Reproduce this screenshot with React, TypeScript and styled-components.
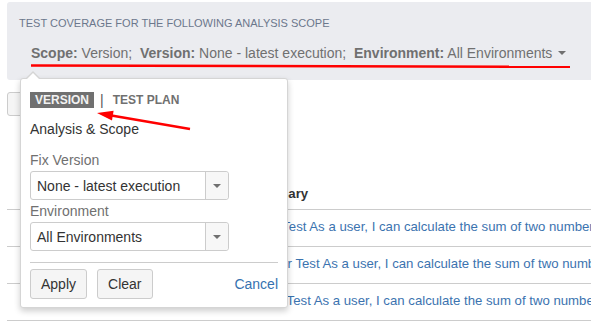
import styled, { createGlobalStyle } from "styled-components";

const GlobalStyle = createGlobalStyle`
  body {
    margin: 0;
    background: #fff;
    font-family: "Liberation Sans", Arial, sans-serif;
    color: #333;
  }
`;

const Page = styled.div`
  position: relative;
  width: 591px;
  height: 330px;
  overflow: hidden;
  padding: 2px 0 0 7px;
  box-sizing: border-box;
`;

const ScopePanel = styled.div`
  height: 78px;
  width: 600px;
  box-sizing: border-box;
  background: #ebecf0;
  border-radius: 3px;
  padding: 14px 12px 0;
`;

const Title = styled.div`
  font-size: 11px;
  line-height: 14px;
  color: #6b778c;
  text-transform: uppercase;
`;

const ScopeLine = styled.div`
  margin-top: 13px;
  padding-left: 12px;
  font-size: 14px;
  line-height: 20px;
  color: #707070;
  display: flex;
  align-items: center;
  white-space: pre;

  b {
    font-weight: bold;
  }
`;

const Caret = styled.span`
  display: inline-block;
  margin-left: 6px;
  border-left: 4px solid transparent;
  border-right: 4px solid transparent;
  border-top: 4px solid #707070;
`;

const Toolbar = styled.div`
  margin-top: 12px;
  display: flex;
  gap: 8px;
`;

const ToolButton = styled.button`
  height: 24px;
  width: 90px;
  background: #f5f5f5;
  border: 1px solid #ccc;
  border-radius: 3px;
`;

const Table = styled.div`
  margin-top: 62px;
  width: 600px;
`;

const Row = styled.div<{ $head?: boolean }>`
  display: grid;
  grid-template-columns: 241px 1fr;
  height: ${(p) => (p.$head ? "32px" : "37px")};
  align-items: center;
  border-bottom: 1px solid #ccc;
  font-size: 13.2px;
  font-weight: ${(p) => (p.$head ? "bold" : "normal")};
  color: ${(p) => (p.$head ? "#333" : "#3b73af")};
  white-space: nowrap;
  overflow: hidden;
  padding-bottom: ${(p) => (p.$head ? "0" : "3px")};
  box-sizing: border-box;
`;

const Popup = styled.div`
  position: absolute;
  left: 20px;
  top: 78px;
  width: 268px;
  box-sizing: border-box;
  background: #fff;
  border: 1px solid #d5d5d5;
  border-radius: 3px;
  box-shadow: 0 3px 6px rgba(0, 0, 0, 0.2);
  padding: 13px 9px 8px;

  &::before,
  &::after {
    content: "";
    position: absolute;
    left: 5px;
    border-left: 7px solid transparent;
    border-right: 7px solid transparent;
  }
  &::before {
    top: -8px;
    border-bottom: 7px solid #d5d5d5;
  }
  &::after {
    top: -6px;
    border-bottom: 7px solid #fff;
  }
`;

const Tabs = styled.div`
  display: flex;
  align-items: center;
  height: 16px;
  font-size: 12px;
  font-weight: bold;
  color: #707070;
`;

const Tab = styled.span<{ $active?: boolean }>`
  height: 16px;
  line-height: 16px;
  padding: 0 5px;
  background: ${(p) => (p.$active ? "#707070" : "transparent")};
  color: ${(p) => (p.$active ? "#f2f2f2" : "#707070")};
`;

const Sep = styled.span`
  margin: 0 4px 0 6px;
  font-weight: normal;
  font-size: 14px;
  color: #555;
`;

const Heading = styled.div`
  margin-top: 11px;
  font-size: 14px;
  line-height: 20px;
  color: #333;
`;

const Label = styled.div<{ $gap: number }>`
  margin-top: ${(p) => p.$gap}px;
  font-size: 14px;
  line-height: 20px;
  color: #707070;
`;

const Select = styled.div`
  margin-top: 1px;
  width: 199px;
  height: 29px;
  box-sizing: border-box;
  border: 1px solid #ccc;
  border-radius: 3px;
  display: flex;
  font-size: 14px;
  color: #333;
`;

const SelectValue = styled.div`
  flex: 1;
  padding-left: 6px;
  display: flex;
  align-items: center;
`;

const SelectArrow = styled.div`
  width: 22px;
  border-left: 1px solid #ccc;
  background: #f7f7f7;
  border-radius: 0 3px 3px 0;
  display: flex;
  align-items: center;
  justify-content: center;

  &::after {
    content: "";
    border-left: 4px solid transparent;
    border-right: 4px solid transparent;
    border-top: 4px solid #707070;
  }
`;

const Divider = styled.div`
  margin-top: 11px;
  height: 1px;
  background: #ccc;
`;

const Actions = styled.div`
  margin-top: 6px;
  display: flex;
  align-items: center;
  gap: 10px;
`;

const Button = styled.button`
  height: 30px;
  padding: 0 10px;
  background: #f5f5f5;
  border: 1px solid #ccc;
  border-radius: 3px;
  font-family: inherit;
  font-size: 14px;
  color: #333;
`;

const CancelLink = styled.a`
  margin-left: auto;
  font-size: 14px;
  color: #3572b0;
  text-decoration: none;
`;

const Annotations = styled.svg`
  position: absolute;
  left: 0;
  top: 0;
  pointer-events: none;
`;

const rows = [
  "Sum: Test As a user, I can calculate the sum of two numbers",
  "Answer Test As a user, I can calculate the sum of two numbers",
  "Adder Test As a user, I can calculate the sum of two numbers",
];

export default function App() {
  return (
    <>
      <GlobalStyle />
      <Page>
        <ScopePanel>
          <Title>Test coverage for the following analysis scope</Title>
          <ScopeLine>
            <b>Scope:</b> Version;  <b>Version:</b> None - latest execution;  <b>Environment:</b> All Environments
            <Caret />
          </ScopeLine>
        </ScopePanel>
        <Toolbar>
          <ToolButton />
        </Toolbar>
        <Table>
          <Row $head>
            <span />
            <span>Summary</span>
          </Row>
          {rows.map((r, i) => (
            <Row key={i}>
              <span />
              <span>{r}</span>
            </Row>
          ))}
        </Table>

        <Popup>
          <Tabs>
            <Tab $active>VERSION</Tab>
            <Sep>|</Sep>
            <Tab>TEST PLAN</Tab>
          </Tabs>
          <Heading>Analysis &amp; Scope</Heading>
          <Label $gap={11}>Fix Version</Label>
          <Select>
            <SelectValue>None - latest execution</SelectValue>
            <SelectArrow />
          </Select>
          <Label $gap={1}>Environment</Label>
          <Select>
            <SelectValue>All Environments</SelectValue>
            <SelectArrow />
          </Select>
          <Divider />
          <Actions>
            <Button>Apply</Button>
            <Button>Clear</Button>
            <CancelLink href="#">Cancel</CancelLink>
          </Actions>
        </Popup>

        <Annotations width="591" height="330">
          <line x1="31" y1="65.5" x2="570" y2="66.8" stroke="#f00" strokeWidth="2.5" />
          <line x1="190" y1="129" x2="110" y2="115.2" stroke="#f00" strokeWidth="2.5" />
          <polygon points="97,113 113.6,110.8 112,120.6" fill="#f00" />
        </Annotations>
      </Page>
    </>
  );
}
